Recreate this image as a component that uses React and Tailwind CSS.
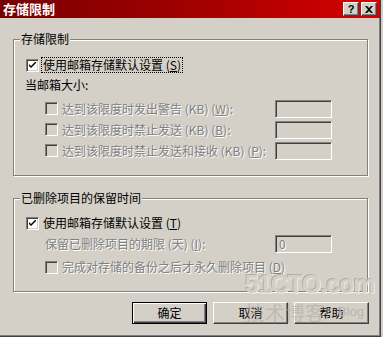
import React from "react";

const raised =
  "border border-t-white border-l-white border-r-[#404040] border-b-[#404040] shadow-[inset_-1px_-1px_0_#808080]";
const sunken =
  "border border-t-[#808080] border-l-[#808080] border-r-white border-b-white shadow-[inset_1px_1px_0_#404040,inset_-1px_-1px_0_#d4d0c8]";
const dim = "text-[#808080] [text-shadow:1px_1px_0_#fff]";

const CheckBox = ({ checked, disabled }) => (
  <div
    className={`w-[13px] h-[13px] shrink-0 flex items-center justify-center ${sunken} ${
      disabled ? "bg-[#d4d0c8]" : "bg-white"
    }`}
  >
    {checked && (
      <svg width="7" height="7" viewBox="0 0 7 7">
        <path d="M0 2 L2 4 L7 -1 L7 1 L2 6 L0 4 Z" fill="#000" />
      </svg>
    )}
  </div>
);

const TextBox = ({ value }) => (
  <div
    className={`w-[57px] h-[18px] bg-[#d4d0c8] ${sunken} ml-auto px-[3px] leading-[15px] ${dim}`}
  >
    {value}
  </div>
);

const Group = ({ title, className, children }) => (
  <div
    className={`relative ml-[13px] w-[355px] border border-[#808080] shadow-[inset_1px_1px_0_#fff,1px_1px_0_#fff] ${className}`}
  >
    <span className="absolute left-[6px] top-[-9px] px-[1px] bg-[#d4d0c8] leading-[16px]">
      {title}
    </span>
    {children}
  </div>
);

const LimitRow = ({ label, key_ }) => (
  <div className="h-[21px] flex items-center pl-[31px] pr-[35px]">
    <CheckBox disabled />
    <span className={`ml-[4px] ${dim}`}>
      {label} (KB) (<u>{key_}</u>):
    </span>
    <TextBox />
  </div>
);

const Button = ({ children, isDefault }) => (
  <div
    className={`w-[75px] h-[22px] flex items-center justify-center ${
      isDefault
        ? "border border-black shadow-[inset_1px_1px_0_#fff,inset_-1px_-1px_0_#404040,inset_-2px_-2px_0_#808080]"
        : raised
    }`}
  >
    {children}
  </div>
);

export default function App() {
  return (
    <div className="w-[383px] h-[337px] bg-[#d4d0c8] font-['SimSun','Noto_Sans_CJK_SC',sans-serif] text-[12px] text-black relative overflow-hidden">
      <div className="w-[381px] h-[337px] border-r border-b border-[#404040] shadow-[inset_-1px_-1px_0_#808080] flex flex-col">
        <div className="h-[18px] bg-linear-to-r from-[#7a0000] via-[#a00000] to-[#d80000] flex items-center pl-[3px] pr-[3px]">
          <span className="text-white font-bold text-[13px] leading-[16px]">存储限制</span>
          <div className="ml-auto flex gap-[2px]">
            <div className={`w-[16px] h-[14px] bg-[#d4d0c8] ${raised} flex items-center justify-center font-bold text-[11px] leading-none font-['Liberation_Sans',sans-serif]`}>
              ?
            </div>
            <div className={`w-[16px] h-[14px] bg-[#d4d0c8] ${raised} flex items-center justify-center`}>
              <svg width="8" height="7" viewBox="0 0 8 7">
                <path d="M0 0 L2 0 L4 2 L6 0 L8 0 L5 3.5 L8 7 L6 7 L4 5 L2 7 L0 7 L3 3.5 Z" fill="#000" />
              </svg>
            </div>
          </div>
        </div>

        <Group title="存储限制" className="mt-[21px] h-[137px]">
          <div className="mt-[17px] h-[16px] flex items-center pl-[12px]">
            <CheckBox checked />
            <span className="ml-[3px] px-[1px] outline-1 outline-dotted outline-black leading-[14px]">
              使用邮箱存储默认设置 (<u>S</u>)
            </span>
          </div>
          <div className="mt-[4px] h-[16px] flex items-center pl-[11px]">当邮箱大小:</div>
          <div className="mt-[5px]">
            <LimitRow label="达到该限度时发出警告" key_="W" />
            <LimitRow label="达到该限度时禁止发送" key_="B" />
            <LimitRow label="达到该限度时禁止发送和接收" key_="P" />
          </div>
        </Group>

        <Group title="已删除项目的保留时间" className="mt-[22px] h-[94px]">
          <div className="mt-[16px] h-[16px] flex items-center pl-[12px]">
            <CheckBox checked />
            <span className="ml-[4px]">
              使用邮箱存储默认设置 (<u>T</u>)
            </span>
          </div>
          <div className="mt-[2px] h-[21px] flex items-center pl-[31px] pr-[35px]">
            <span className={dim}>
              保留已删除项目的期限 (天) (<u>I</u>):
            </span>
            <TextBox value="0" />
          </div>
          <div className="mt-[5px] h-[16px] flex items-center pl-[31px]">
            <CheckBox disabled />
            <span className={`ml-[4px] ${dim}`}>
              完成对存储的备份之后才永久删除项目 (<u>D</u>)
            </span>
          </div>
        </Group>

        <div className="mt-[10px] ml-[132px] flex gap-[6px]">
          <Button isDefault>确定</Button>
          <Button>取消</Button>
          <Button>帮助</Button>
        </div>
      </div>

      {/* watermark */}
      <span className="absolute left-[245px] top-[272px] text-[25px] tracking-[-1px] font-bold leading-none text-[#d4d0c8] [text-shadow:-1px_-1px_0_#b0aca4,1px_1px_0_#eeeae2] font-['Liberation_Sans',sans-serif] opacity-90">
        51CTO.com
      </span>
      <span className="absolute left-[245px] top-[303px] text-[20px] leading-none text-[#a9a59d] opacity-50">
        技术博客
      </span>
      <span className="absolute left-[338px] top-[305px] text-[13px] leading-none text-[#b8b4ac] font-['Liberation_Sans',sans-serif]">
        Blog
      </span>
    </div>
  );
}
